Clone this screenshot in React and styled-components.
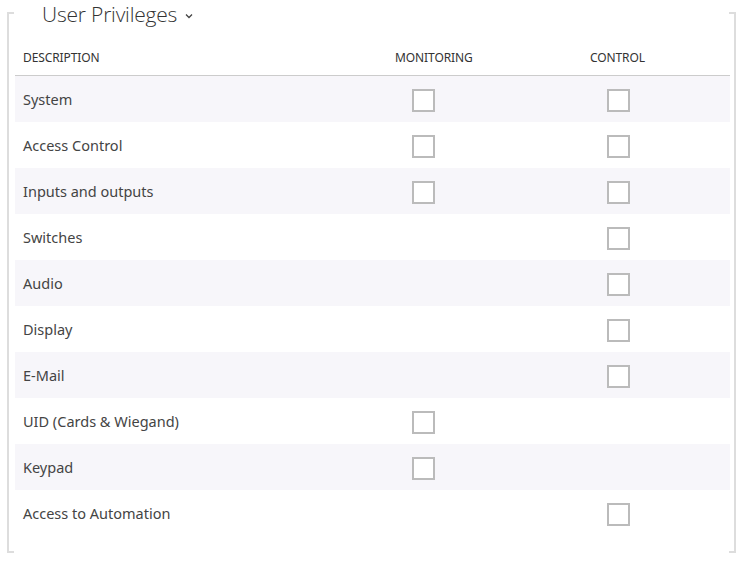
import React from 'react'
import styled, { createGlobalStyle } from 'styled-components'

const GlobalStyle = createGlobalStyle`
    body {
        margin: 0;
        background: #fff;
        font-family: 'Noto Sans', 'Open Sans', sans-serif;
        color: #333;
    }
`

const Page = styled('div')`
    width: 743px;
    height: 567px;
    padding: 12px 7px 0 7px;
    box-sizing: border-box;
`

const Frame = styled('section')`
    position: relative;
    display: flow-root;
    height: 541px;
    padding: 0 4px 0 6px;
    border-left: 2px solid #ddd;
    border-right: 2px solid #ddd;
    box-sizing: border-box;

    &::before,
    &::after {
        content: '';
        position: absolute;
        left: 0;
        right: 0;
        height: 2px;
        background: linear-gradient(
            to right,
            #ddd 0,
            #ddd 5px,
            transparent 5px,
            transparent calc(100% - 5px),
            #ddd calc(100% - 5px)
        );
    }
    &::before {
        top: 0;
    }
    &::after {
        bottom: 0;
    }
`

const Title = styled('h2')`
    display: flex;
    align-items: center;
    gap: 8px;
    margin: -12px 0 0 27px;
    height: 28px;
    font-family: 'Open Sans', sans-serif;
    font-weight: 300;
    font-size: 21px;
    color: #333;
    letter-spacing: -0.2px;
`

const Chevron = styled('svg')`
    width: 8px;
    height: 6px;
    margin-top: 3px;
`

const Table = styled('div')`
    margin-top: 13px;
    width: 715px;
`

const Row = styled('div')`
    display: grid;
    grid-template-columns: 372px 195px 1fr;
    align-items: center;
    height: ${props => (props.header ? '35px' : '46px')};
    background: ${props => (props.shaded ? '#f7f6fa' : 'transparent')};
    border-bottom: ${props => (props.header ? '1px solid #ccc' : 'none')};
    box-sizing: border-box;
`

const HeadCell = styled('div')`
    padding-left: 8px;
    padding-bottom: 1px;
    font-size: 12px;
    text-transform: uppercase;
    color: #333;
    letter-spacing: -0.1px;
`

const Cell = styled('div')`
    padding-left: 8px;
    font-size: 14.5px;
    color: #444;
`

const BoxCell = styled('div')`
    padding-left: 25px;
    padding-top: 2px;
    display: flex;
    align-items: center;
`

const Box = styled('input').attrs({ type: 'checkbox' })`
    appearance: none;
    margin: 0;
    width: 23px;
    height: 23px;
    border: 2px solid #bbb;
    background: #fff;
    box-sizing: border-box;
    cursor: pointer;
`

const privileges = [
    { name: 'System', monitoring: true, control: true },
    { name: 'Access Control', monitoring: true, control: true },
    { name: 'Inputs and outputs', monitoring: true, control: true },
    { name: 'Switches', monitoring: false, control: true },
    { name: 'Audio', monitoring: false, control: true },
    { name: 'Display', monitoring: false, control: true },
    { name: 'E-Mail', monitoring: false, control: true },
    { name: 'UID (Cards & Wiegand)', monitoring: true, control: false },
    { name: 'Keypad', monitoring: true, control: false },
    { name: 'Access to Automation', monitoring: false, control: true },
]

const App = () => (
    <Page>
        <GlobalStyle />
        <Frame>
            <Title>
                User Privileges
                <Chevron viewBox="0 0 8 6">
                    <path d="M1 1.5 L4 4.5 L7 1.5" fill="none" stroke="#444" strokeWidth="1.3" />
                </Chevron>
            </Title>
            <Table>
                <Row header>
                    <HeadCell>Description</HeadCell>
                    <HeadCell>Monitoring</HeadCell>
                    <HeadCell>Control</HeadCell>
                </Row>
                {privileges.map((p, i) => (
                    <Row key={p.name} shaded={i % 2 === 0}>
                        <Cell>{p.name}</Cell>
                        <BoxCell>{p.monitoring && <Box />}</BoxCell>
                        <BoxCell>{p.control && <Box />}</BoxCell>
                    </Row>
                ))}
            </Table>
        </Frame>
    </Page>
)

export default App
